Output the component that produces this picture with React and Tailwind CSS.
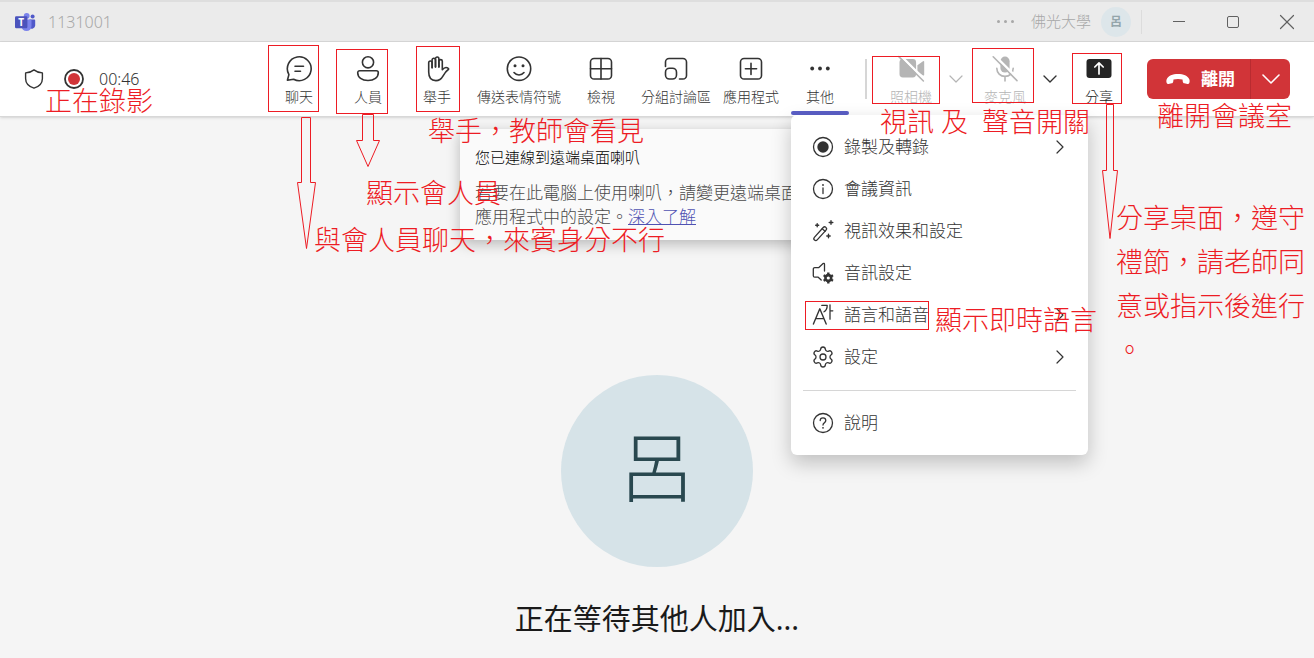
import React from 'react';
import { ChevronDown, ChevronRight, Settings, X } from 'lucide-react';

const Icon = ({ size = 28, children }) => (
  <svg
    width={size}
    height={size}
    viewBox={`0 0 ${size} ${size}`}
    fill="none"
    stroke="currentColor"
    strokeWidth="1.6"
    strokeLinecap="round"
    strokeLinejoin="round"
    aria-hidden="true"
  >
    {children}
  </svg>
);

const TeamsLogo = () => (
  <svg width="22" height="20" viewBox="0 0 22 20" aria-hidden="true">
    <circle cx="18.6" cy="4.6" r="2" fill="#5059c9" />
    <path d="M15.4 7.6h5a.8.8 0 0 1 .8.8v5.2a3.3 3.3 0 0 1-5.8 2z" fill="#5059c9" />
    <circle cx="12.7" cy="3.8" r="2.9" fill="#7b83eb" />
    <path d="M8.2 7.6h8.4a.9.9 0 0 1 .9.9v5.6a5 5 0 0 1-10 0V8.4z" fill="#7b83eb" />
    <rect x="1" y="4.2" width="12.4" height="12" rx="1.2" fill="#4b53bc" />
    <text x="7.2" y="13.9" textAnchor="middle" fontSize="10" fontWeight="700" fill="#fff" fontFamily="Noto Sans, sans-serif">T</text>
  </svg>
);

const ChatIcon = () => (
  <Icon>
    <path d="M2.4 25.2 3.9 19.6A11.9 11.9 0 1 1 8.6 24.2Z" />
    <path d="M10 11.2h8.5M10 16.2h5.5" />
  </Icon>
);

const PeopleIcon = () => (
  <Icon>
    <circle cx="14" cy="7.3" r="5.6" />
    <path d="M5.7 15.7h16.6a2 2 0 0 1 2 2c0 4.6-4.2 7.8-10.3 7.8S3.7 22.3 3.7 17.7a2 2 0 0 1 2-2Z" />
  </Icon>
);

const HandIcon = () => (
  <Icon>
    <g transform="translate(1.5 0)">
      <path d="M7.6 12.8V7.7a1.7 1.7 0 0 0-3.4 0V17c0 5.2 2.6 8.6 7.2 8.6 4 0 5.6-2 7.2-4.8 1.5-2.5 3-4.8 5.2-6.3.4-.3.4-.8 0-1.1-1.9-1.5-4.1-.9-6 1.3V6.3a1.7 1.7 0 0 0-3.4 0V12" />
      <path d="M14.4 12V3.7a1.7 1.7 0 0 0-3.4 0V12" />
      <path d="M11 12V5a1.7 1.7 0 0 0-3.4 0v7.8" />
    </g>
  </Icon>
);

const SmileIcon = () => (
  <Icon>
    <circle cx="14" cy="13.7" r="11.7" />
    <circle cx="10" cy="10.8" r="1.5" fill="currentColor" stroke="none" />
    <circle cx="18" cy="10.8" r="1.5" fill="currentColor" stroke="none" />
    <path d="M9 17.6c2.6 3.2 7.4 3.2 10 0" />
  </Icon>
);

const ViewIcon = () => (
  <Icon>
    <rect x="3.5" y="3.5" width="21" height="20.5" rx="3.6" />
    <path d="M14 3.5V24M3.5 13.7h21" />
  </Icon>
);

const RoomsIcon = () => (
  <Icon>
    <path d="M3.5 11.5V7.1a3.6 3.6 0 0 1 3.6-3.6h13.8a3.6 3.6 0 0 1 3.6 3.6v13.3a3.6 3.6 0 0 1-3.6 3.6h-3.4" />
    <rect x="3.5" y="13.2" width="11" height="10.8" rx="4" />
  </Icon>
);

const AppsIcon = () => (
  <Icon>
    <rect x="3.5" y="3.5" width="21" height="20.5" rx="3.6" />
    <path d="M14 8.2v11.2M8.4 13.8h11.2" />
  </Icon>
);

const MoreIcon = () => (
  <Icon>
    <g fill="currentColor" stroke="none">
      <circle cx="6.2" cy="13.5" r="1.9" />
      <circle cx="14" cy="13.5" r="1.9" />
      <circle cx="21.8" cy="13.5" r="1.9" />
    </g>
  </Icon>
);

const CameraOffIcon = () => (
  <Icon>
    <g fill="currentColor" stroke="none">
      <rect x="2.5" y="4" width="16.6" height="18.5" rx="3.4" />
      <path d="M20.4 10.3 26 6.2a.8.8 0 0 1 1.2.6v13a.8.8 0 0 1-1.2.6l-5.6-4.1z" />
    </g>
    <path d="M3 .2 28 25" stroke="#fff" strokeWidth="2.6" />
    <path d="M1.8 1.6 26.4 26" />
  </Icon>
);

const MicOffIcon = () => (
  <Icon>
    <rect x="9.4" y="1.6" width="9.2" height="16" rx="4.6" fill="currentColor" stroke="none" />
    <path d="M5.8 13.2c0 4.7 3.6 8.2 8.2 8.2s8.2-3.5 8.2-8.2M14 21.4V26" />
    <path d="M3.6.4 27.5 24.3" stroke="#fff" strokeWidth="2.4" />
    <path d="M2.2 1.8 26 25.6" />
  </Icon>
);

const ShareIcon = () => (
  <Icon>
    <rect x="1.5" y="4" width="25" height="19" rx="3" fill="currentColor" stroke="none" />
    <path d="M14 19V8.2M9.8 12 14 7.8l4.2 4.2" stroke="#fff" strokeWidth="1.7" />
  </Icon>
);

const ShieldIcon = () => (
  <Icon size={20}>
    <path
      d="M10 .9c2.3 1.9 5.2 2.9 8.4 3v5.6c0 4.9-3 8-8.4 9.7-5.4-1.7-8.4-4.8-8.4-9.7V3.9c3.2-.1 6.100-1.100 8.400-3Z"
      strokeWidth="1.4"
    />
  </Icon>
);

const RecordingIcon = () => (
  <Icon size={20}>
    <circle cx="10" cy="10" r="9" strokeWidth="1.8" />
    <circle cx="10" cy="10" r="6" fill="#d13438" stroke="none" />
  </Icon>
);

const HangUpIcon = () => (
  <svg width="24" height="12" viewBox="0 0 24 12" fill="currentColor" aria-hidden="true">
    <path d="M12 1C6.6 1 2.2 2.8.7 6.2c-.5 1.2-.4 2.6 0 3.7.3.8 1 1.2 1.8 1l3.200-.6c.8-.2 1.400-.8 1.500-1.600l.3-2.100c2.900-.9 6.100-.9 9 0l.3 2.100c.1.800.7 1.400 1.500 1.600l3.200.6c.8.2 1.500-.2 1.800-1 .4-1.100.5-2.500 0-3.700C21.800 2.800 17.400 1 12 1Z" />
  </svg>
);

const RecordIcon = () => (
  <Icon size={22}>
    <circle cx="11" cy="11" r="9.5" strokeWidth="1.3" />
    <circle cx="11" cy="11" r="5.7" fill="currentColor" stroke="none" />
  </Icon>
);

const InfoIcon = () => (
  <Icon size={22}>
    <circle cx="11" cy="11" r="9.5" strokeWidth="1.3" />
    <path d="M11 10v5.5" strokeWidth="1.3" />
    <circle cx="11" cy="7" r=".9" fill="currentColor" stroke="none" />
  </Icon>
);

const EffectsIcon = () => (
  <Icon size={22}>
    <rect x="-1.9" y="-8.5" width="3.8" height="17" rx="1.9" transform="translate(8.2 13.7) rotate(42)" strokeWidth="1.3" />
    <path d="m10.2 8.7 2.9 2.6" strokeWidth="1.2" />
    <path d="M19 .7v3.6M17.2 2.5h3.6M5.2 3.7v3M3.7 5.2h3M16.500 14.300v3.400M14.800 16h3.400" strokeWidth="1.4" />
  </Icon>
);

const AudioIcon = () => (
  <Icon size={22}>
    <path d="M12.5 9V2.2c0-.7-.8-1.1-1.4-.6L6.6 5.7H2.800c-.8 0-1.500.6-1.500 1.400v6.600c0 .8.700 1.500 1.500 1.500h3.400l3 2.800" strokeWidth="1.3" />
    <g strokeLinecap="butt">
      <circle cx="16.3" cy="16" r="2.9" strokeWidth="2.6" />
      <path d="M16.3 10.6v2M16.3 19.4v2M11.6 13.3l1.800 1M19.200 17.700l1.800 1M11.600 18.700l1.800-1M19.200 14.300l1.800-1" strokeWidth="2.4" />
    </g>
  </Icon>
);

const LanguageIcon = () => (
  <Icon size={22}>
    <path d="M1.4 20 7.8 4.8 14.2 20M3.8 14.6h8" strokeWidth="1.4" />
    <path d="M9.8 1.4h5.4c0 3.2-1 5-3.2 6.4M18 .8v14.4M18 6.8h2.8" strokeWidth="1.3" />
  </Icon>
);

const HelpIcon = () => (
  <Icon size={22}>
    <circle cx="11" cy="11" r="9.5" strokeWidth="1.3" />
    <path d="M8.2 8.6c0-1.7 1.2-2.8 2.8-2.8s2.800 1.100 2.800 2.700c0 2.200-2.800 2.300-2.800 4.500" strokeWidth="1.3" />
    <circle cx="11" cy="15.8" r=".9" fill="currentColor" stroke="none" />
  </Icon>
);

const ToolButton = ({ icon, label, className = '', ...rest }) => (
  <button className={`flex min-w-[58px] flex-col items-center gap-1 pt-[13px] pb-[9px] ${className}`} {...rest}>
    {icon}
    <span className="text-sm leading-5 whitespace-nowrap">{label}</span>
  </button>
);

const menuItems = [
  { label: '錄製及轉錄', icon: <RecordIcon />, submenu: true },
  { label: '會議資訊', icon: <InfoIcon /> },
  { label: '視訊效果和設定', icon: <EffectsIcon /> },
  { label: '音訊設定', icon: <AudioIcon /> },
  { label: '語言和語音', icon: <LanguageIcon />, submenu: true },
  { label: '設定', icon: <Settings size={24} strokeWidth={1.3} className="-mx-px" />, submenu: true },
];

const MenuItem = ({ item }) => (
  <button role="menuitem" className="flex h-[42px] w-full items-center gap-[10px] pr-4 pl-[21px] text-left text-[17px]">
    {item.icon}
    <span className="flex-1">{item.label}</span>
    {item.submenu && <ChevronRight size={24} strokeWidth={1.2} />}
  </button>
);

const MoreMenu = () => (
  <div role="menu" className="absolute top-[73px] left-0 z-20 w-[297px] rounded-md bg-white py-[11px] text-[#333] shadow-[0_8px_20px_rgba(0,0,0,0.22)]">
    {menuItems.map(item => <MenuItem key={item.label} item={item} />)}
    <hr className="mx-3 mt-3 mb-[11px] border-[#d6d6d6]" />
    <MenuItem item={{ label: '說明', icon: <HelpIcon /> }} />
  </div>
);

const TitleBar = () => (
  <header className="flex h-[42px] items-center border-t-2 border-b border-t-[#dedede] border-b-[#d8d8d8] bg-[#ebebeb] pl-[14px] text-[#a8a8a8]">
    <TeamsLogo />
    <span className="ml-3 text-base">1131001</span>
    <div className="ml-auto flex items-center gap-[10px]">
      <button aria-label="更多選項" className="flex w-[30px] justify-center gap-1">
        <i className="size-[3px] rounded-full bg-[#a8a8a8]" />
        <i className="size-[3px] rounded-full bg-[#a8a8a8]" />
        <i className="size-[3px] rounded-full bg-[#a8a8a8]" />
      </button>
      <span className="text-[15px]">佛光大學</span>
      <span className="flex size-[30px] items-center justify-center rounded-full bg-[#dde6ea] text-xs font-bold text-[#94a5ab]">呂</span>
      <span className="h-6 w-px bg-[#dcdcdc]" />
      <div className="flex text-[#616161]">
        <button aria-label="最小化" className="flex h-8 w-[54px] items-center justify-center">
          <span className="h-px w-3 bg-current" />
        </button>
        <button aria-label="最大化" className="flex h-8 w-[54px] items-center justify-center">
          <span className="size-3 rounded-xs border border-current" />
        </button>
        <button aria-label="關閉" className="flex h-8 w-[54px] items-center justify-center">
          <X size={26} strokeWidth={1.1} />
        </button>
      </div>
    </div>
  </header>
);

const Toolbar = () => (
  <div className="relative z-10 flex items-center border-b border-[#d8d8d8] bg-white pr-6 pl-6 text-[#333] shadow-sm">
    <div className="flex items-center gap-5">
      <ShieldIcon />
      <div className="flex items-center gap-[15px]">
        <RecordingIcon />
        <span className="text-base leading-5">00:46</span>
      </div>
    </div>

    <div className="ml-auto flex items-center gap-[11px]">
      <ToolButton icon={<ChatIcon />} label="聊天" />
      <ToolButton icon={<PeopleIcon />} label="人員" />
      <ToolButton icon={<HandIcon />} label="舉手" />
      <ToolButton icon={<SmileIcon />} label="傳送表情符號" />
      <ToolButton icon={<ViewIcon />} label="檢視" />
      <ToolButton icon={<RoomsIcon />} label="分組討論區" />
      <ToolButton icon={<AppsIcon />} label="應用程式" />
      <div className="relative">
        <ToolButton icon={<MoreIcon />} label="其他" aria-haspopup="menu" aria-expanded="true" />
        <span className="absolute bottom-px left-0 h-1 w-full rounded-full bg-[#5b5fc7]" />
        <MoreMenu />
      </div>
    </div>

    <span className="mr-[15px] ml-4 h-10 w-0.5 bg-[#d6d6d6]" />

    <div className="flex items-center gap-[5px]">
      <div className="flex items-center text-[#b5b5b5]">
        <ToolButton icon={<CameraOffIcon />} label="照相機" disabled />
        <button aria-label="照相機選項" className="flex w-[31px] justify-center" disabled>
          <ChevronDown size={24} strokeWidth={1.2} />
        </button>
      </div>
      <div className="flex items-center">
        <ToolButton icon={<MicOffIcon />} label="麥克風" className="text-[#b5b5b5]" disabled />
        <button aria-label="麥克風選項" className="flex w-[31px] justify-center">
          <ChevronDown size={24} strokeWidth={1.4} />
        </button>
      </div>
      <ToolButton icon={<ShareIcon />} label="分享" className="text-[#242424]" />
    </div>

    <div className="ml-[19px] flex h-10 overflow-hidden rounded-md bg-[#d13438] text-white">
      <button className="flex items-center gap-[11px] border-r border-[#b92b30] pr-[15px] pl-[19px] text-[17px] font-bold whitespace-nowrap">
        <HangUpIcon />
        離開
      </button>
      <button aria-label="離開選項" className="flex w-[39px] items-center justify-center">
        <ChevronDown size={32} strokeWidth={1.2} />
      </button>
    </div>
  </div>
);

const Toast = () => (
  <section className="mx-auto mt-3 w-[394px] rounded-md bg-[#fafafa] pt-[18px] pr-12 pb-[11px] pl-[15px] shadow-[0_4px_14px_rgba(0,0,0,0.25)]">
    <h2 className="text-[15px] leading-5 font-light text-black">您已連線到遠端桌面喇叭</h2>
    <p className="mt-[14px] text-[17px] leading-6 text-[#4a4a4a]">
      若要在此電腦上使用喇叭，請變更遠端桌面應用程式中的設定。
      <a href="#learn-more" className="text-[#4f52b2] underline">深入了解</a>
    </p>
  </section>
);

const boxes = [
  'left-[268px] top-[45px] h-[67px] w-[51px]',
  'left-[336px] top-[49px] h-[65px] w-[52px]',
  'left-[416px] top-[46px] h-[66px] w-11',
  'left-[872px] top-14 h-12 w-[68px]',
  'left-[972px] top-12 h-[55px] w-[62px]',
  'left-[1072px] top-[53px] h-[51px] w-[50px]',
  'left-[805px] top-[301px] h-[29px] w-[124px]',
];

const notes = [
  { text: '正在錄影', pos: 'left-[45px] top-[85px]' },
  { text: '舉手，教師會看見', pos: 'left-[428px] top-[115px]' },
  { text: '顯示會人員', pos: 'left-[366px] top-[177px]' },
  { text: '與會人員聊天，來賓身分不行', pos: 'left-[314px] top-[224px]' },
  { text: '視訊 及  聲音開關', pos: 'left-[880px] top-[106px]' },
  { text: '離開會議室', pos: 'left-[1157px] top-[100px]' },
  { text: '顯示即時語言', pos: 'left-[935px] top-[304px]' },
];

// Hand-placed red notes drawn over the meeting window
const Annotations = () => (
  <div className="pointer-events-none absolute inset-0 z-30 overflow-hidden text-[27px] text-[#ed1c24]">
    {boxes.map(box => <span key={box} className={`absolute border border-[#ed1c24] ${box}`} />)}

    <svg className="absolute top-0 left-0" width="1200" height="260" fill="none" stroke="#ed1c24" aria-hidden="true">
      <path d="M301.500 117.500h9v65h5l-9 66-9-66h4z" />
      <path d="M362.500 114.500h11v26h6l-11.500 26-11.500-26h6z" />
      <path d="M1106.500 104.500h7v66h4l-7.500 68-7.500-68h4z" />
    </svg>

    {notes.map(note => (
      <p key={note.text} className={`absolute leading-8 whitespace-pre ${note.pos}`}>{note.text}</p>
    ))}
    <p className="absolute top-[196px] left-[1116px] leading-[44px] whitespace-nowrap">
      分享桌面，遵守<br />禮節，請老師同<br />意或指示後進行<br />。
    </p>
  </div>
);

export default function App() {
  return (
    <div className="relative flex min-h-screen flex-col bg-[#f5f5f5] font-['Noto_Sans','Noto_Sans_CJK_TC',sans-serif] font-light">
      <TitleBar />
      <Toolbar />
      <main className="flex flex-1 flex-col">
        <Toast />
        <div className="mt-[135px] flex flex-col items-center">
          <div className="flex size-48 items-center justify-center rounded-full bg-[#d6e3e8] pb-2 text-[76px] leading-none text-[#29484f]">呂</div>
          <h1 className="mt-8 text-[29px] leading-10 font-normal text-[#1a1a1a]">正在等待其他人加入...</h1>
        </div>
      </main>
      <Annotations />
    </div>
  );
}
